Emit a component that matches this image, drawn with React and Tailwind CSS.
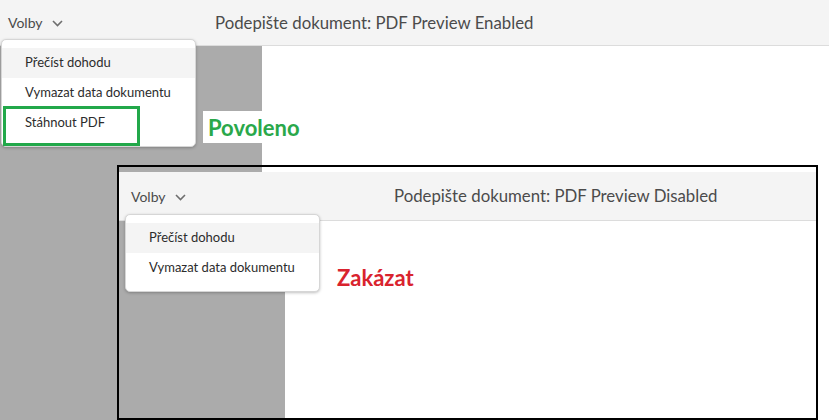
const font = { fontFamily: "Lato, 'Noto Sans', sans-serif" };

function Chevron() {
  return (
    <svg width="11" height="7" viewBox="0 0 11 7" className="ml-[9px] mt-[2px]">
      <polyline points="1,1 5.5,5.5 10,1" fill="none" stroke="#6e6e6e" strokeWidth="1.6" />
    </svg>
  );
}

function Header({ title, titleLeft, height, padLeft }) {
  return (
    <div className={"relative flex items-center bg-[#f4f4f4] border-b border-[#dcdcdc] shrink-0 " + height}>
      <div className={"flex items-center text-[14px] text-[#4b4b4b] " + padLeft}>
        Volby
        <Chevron />
      </div>
      <div className={"absolute text-[16.8px] text-[#4b4b4b] " + titleLeft}>{title}</div>
    </div>
  );
}

function Menu({ items, className }) {
  return (
    <div className={"absolute w-[195px] bg-white rounded-[5px] border border-[#d6d6d6] shadow-[0_1px_3px_rgba(0,0,0,0.25)] py-[8px] " + className}>
      {items.map((it, i) => (
        <div
          key={it}
          className={"h-[30px] flex items-center pl-[23px] text-[13px] text-[#2c2c2c] " + (i === 0 ? "bg-[#f4f4f4]" : "")}
        >
          {it}
        </div>
      ))}
    </div>
  );
}

export default function App() {
  return (
    <div className="relative w-[829px] h-[420px] overflow-hidden bg-white" style={font}>
      {/* Background screenshot: enabled */}
      <div className="flex flex-col h-full">
        <Header
          title="Podepište dokument: PDF Preview Enabled"
          titleLeft="left-[215px]"
          height="h-[46px]"
          padLeft="pl-[8px]"
        />
        <div className="flex flex-1">
          <div className="w-[262px] bg-[#ababab]" />
          <div className="flex-1 bg-white" />
        </div>
      </div>

      <Menu
        items={["Přečíst dohodu", "Vymazat data dokumentu", "Stáhnout PDF"]}
        className="left-[1px] top-[39px]"
      />
      <div className="absolute left-[3px] top-[106px] w-[137px] h-[40px] border-[3px] border-[#22a84a]" />
      <div
        className="absolute left-[203px] top-[111px] w-[102px] h-[32px] bg-white flex items-center pl-[5px] text-[22px] font-bold text-[#2aa84a]"
        style={{ fontFamily: "Lato, sans-serif" }}
      >
        Povoleno
      </div>

      {/* Overlay screenshot: disabled */}
      <div className="absolute left-[117px] top-[165px] w-[701px] h-[255px] border-2 border-black flex flex-col">
        <div className="flex h-[5px] shrink-0">
          <div className="w-[143px] bg-[#ababab]" />
          <div className="flex-1 bg-white" />
        </div>
        <Header
          title="Podepište dokument: PDF Preview Disabled"
          titleLeft="left-[275px]"
          height="h-[49px]"
          padLeft="pl-[12px]"
        />
        <div className="relative flex flex-1">
          <div className="w-[166px] bg-[#ababab]" />
          <div className="flex-1 bg-white" />
          <div
            className="absolute left-[218px] top-[40px] text-[22px] font-bold text-[#d9232e]"
            style={{ fontFamily: "Lato, sans-serif" }}
          >
            Zakázat
          </div>
        </div>
        <Menu items={["Přečíst dohodu", "Vymazat data dokumentu"]} className="left-[6px] top-[47px]" />
      </div>
    </div>
  );
}
